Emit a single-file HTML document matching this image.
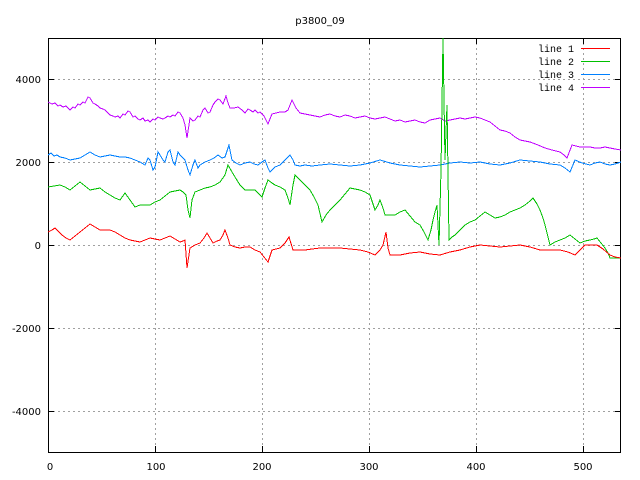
<!DOCTYPE html>
<html><head><meta charset="utf-8"><style>
html,body{margin:0;padding:0;background:#fff;}
svg{display:block;}
text{font-family:"DejaVu Sans","Liberation Sans",sans-serif;font-size:10px;fill:#000;}
.m{font-family:"Liberation Mono","DejaVu Sans Mono",monospace;font-size:10px;}
</style></head><body>
<svg width="640" height="480" viewBox="0 0 640 480" xmlns="http://www.w3.org/2000/svg">
<rect width="640" height="480" fill="#fff"/>
<g stroke="#a0a0a0" stroke-width="1" stroke-dasharray="2,3" fill="none">
<path d="M48 79.5H621M48 162.5H621M48 328.5H621M48 411.5H621M48 245.5H621"/>
<path d="M155.5 38V452M262.5 38V452M369.5 38V452M476.5 38V452M583.5 38V452"/>
</g>
<g stroke="#000" stroke-width="1" fill="none">
<rect x="48.5" y="38.5" width="572" height="414"/>
<path d="M48 79.5h6M48 162.5h6M48 245.5h6M48 328.5h6M48 411.5h6M621 79.5h-6M621 162.5h-6M621 245.5h-6M621 328.5h-6M621 411.5h-6"/>
<path d="M155.5 452v-6M262.5 452v-6M369.5 452v-6M476.5 452v-6M583.5 452v-6M155.5 38v6M262.5 38v6M369.5 38v6M476.5 38v6M583.5 38v6"/>
</g>
<text x="320" y="24" text-anchor="middle">p3800_09</text>
<g text-anchor="end">
<text x="41" y="83">4000</text>
<text x="41" y="166">2000</text>
<text x="41" y="249">0</text>
<text x="41" y="332">-2000</text>
<text x="41" y="415">-4000</text>
</g>
<g text-anchor="middle">
<text x="50" y="470">0</text>
<text x="156" y="470">100</text>
<text x="262" y="470">200</text>
<text x="369" y="470">300</text>
<text x="476" y="470">400</text>
<text x="583" y="470">500</text>
</g>
<g stroke-width="1" fill="none" shape-rendering="crispEdges">
<polyline stroke="#c000ff" points="48,102 52,104 55,103 58,106 60,105 63,107 66,106 70,110 73,107 75,108 78,104 80,105 83,102 85,103 88,97 90,98 93,103 95,104 98,106 100,108 103,109 105,110 108,113 110,115 113,116 115,117 118,116 120,118 123,114 125,115 128,111 130,112 133,117 135,116 138,119 140,120 143,118 145,121 148,120 150,122 153,119 155,120 158,117 160,118 163,119 165,118 168,116 170,117 173,115 175,116 178,112 180,113 183,118 185,125 187,138 190,118 193,121 195,120 198,116 200,117 203,110 205,108 208,113 210,112 213,105 215,102 218,99 220,100 223,104 226,96 228,103 230,108 234,108 238,107 242,110 245,113 248,109 250,110 253,112 255,110 258,113 260,112 264,116 268,124 272,114 276,113 280,112 285,112 288,110 292,100 296,108 300,113 305,114 310,115 315,116 320,117 325,115 330,114 335,116 340,117 345,115 350,116 355,118 360,117 365,116 370,118 375,119 380,118 385,117 390,119 395,121 400,120 405,122 410,121 415,120 420,122 425,123 430,120 435,119 440,118 445,121 450,120 455,119 460,118 465,119 470,118 475,117 480,118 485,120 490,122 495,126 500,130 505,131 510,133 515,137 520,140 525,141 530,142 538,145 545,148 552,150 560,152 564,155 567,158 572,145 576,146 580,147 585,147 590,147 595,148 600,148 605,147 610,148 615,149 621,150"/>
<polyline stroke="#0080ff" points="48,155 51,153 54,156 57,155 60,157 65,158 70,160 75,159 80,158 85,155 90,152 95,155 100,157 105,156 110,155 115,156 120,157 125,157 130,158 135,160 140,162 145,165 148,158 150,160 153,170 155,167 158,152 160,155 163,160 165,162 168,152 170,150 173,162 175,165 178,152 180,155 183,158 185,160 188,170 190,175 193,165 195,160 198,168 200,165 205,162 210,160 214,158 218,155 222,158 225,157 229,145 232,160 236,163 240,165 245,163 250,162 254,164 258,165 262,162 265,160 268,168 270,172 275,167 280,165 285,160 290,155 293,160 295,165 300,166 305,165 312,166 320,165 330,164 340,165 350,166 360,165 370,163 380,160 390,163 400,165 410,166 420,167 430,166 440,165 450,163 460,162 470,163 480,162 490,164 500,165 510,163 520,160 530,161 540,162 550,164 560,165 565,168 570,172 575,160 582,163 590,165 595,163 600,162 605,164 610,165 615,164 621,162"/>
<polyline stroke="#00c000" points="48,187 54,186 60,185 65,187 70,190 75,186 80,182 85,186 90,190 95,189 100,188 105,192 110,195 115,198 120,200 125,193 130,200 135,207 140,205 145,205 150,205 155,202 160,200 165,196 170,192 175,191 180,190 183,192 186,195 188,210 190,218 192,200 195,192 200,190 205,188 210,187 215,185 220,182 225,175 228,165 232,172 235,177 240,185 245,190 250,190 255,190 258,193 262,197 265,188 268,180 272,183 275,185 280,187 285,190 288,198 290,205 293,185 295,175 300,180 305,185 310,190 314,197 318,205 322,222 326,215 330,210 335,205 340,200 345,194 350,188 355,189 360,190 365,192 370,195 375,210 378,205 380,200 383,208 385,215 390,215 395,215 400,212 405,210 410,216 415,222 420,225 424,232 428,240 431,230 433,220 435,212 437,205 439,245 441,170 443,38 445,160 447,105 449,240 452,237 455,235 460,230 465,225 470,222 475,220 480,216 485,212 490,215 495,218 500,217 505,215 510,212 515,210 520,208 525,205 530,201 533,198 537,204 540,210 543,218 545,225 548,237 550,245 555,242 560,240 565,238 570,235 575,239 580,243 585,241 590,240 594,239 597,238 601,243 605,248 608,253 610,258 615,258 621,258"/>
<polyline stroke="#ff0000" points="48,232 52,230 55,228 58,231 62,235 66,238 70,240 75,236 80,232 85,228 90,224 95,227 100,230 105,230 110,230 115,232 120,235 125,238 130,240 135,241 140,242 145,240 150,238 155,239 160,240 165,238 170,236 175,239 180,242 183,241 185,240 187,268 190,248 195,245 200,243 204,238 207,233 210,238 213,243 217,241 220,240 223,235 225,230 228,238 230,245 235,247 240,248 245,247 250,247 255,250 260,252 264,257 268,262 272,250 276,249 280,248 285,243 289,237 293,250 299,250 305,250 312,249 320,248 330,248 340,248 350,249 360,250 368,252 375,255 380,250 383,245 386,232 388,248 390,255 395,255 400,255 410,253 420,252 430,254 440,255 450,252 460,250 470,247 480,245 490,246 500,247 510,246 520,245 530,247 540,250 550,250 560,250 568,252 575,255 580,250 585,245 591,245 597,245 603,249 610,255 615,257 621,258"/>
</g>
<g text-anchor="end">
<text class="m" x="574" y="52">line 1</text>
<text class="m" x="574" y="65">line 2</text>
<text class="m" x="574" y="78">line 3</text>
<text class="m" x="574" y="91">line 4</text>
</g>
<g stroke-width="1">
<path d="M581 48.5H610" stroke="#ff0000"/>
<path d="M581 61.5H610" stroke="#00c000"/>
<path d="M581 74.5H610" stroke="#0080ff"/>
<path d="M581 87.5H610" stroke="#c000ff"/>
</g>
</svg>
</body></html>
